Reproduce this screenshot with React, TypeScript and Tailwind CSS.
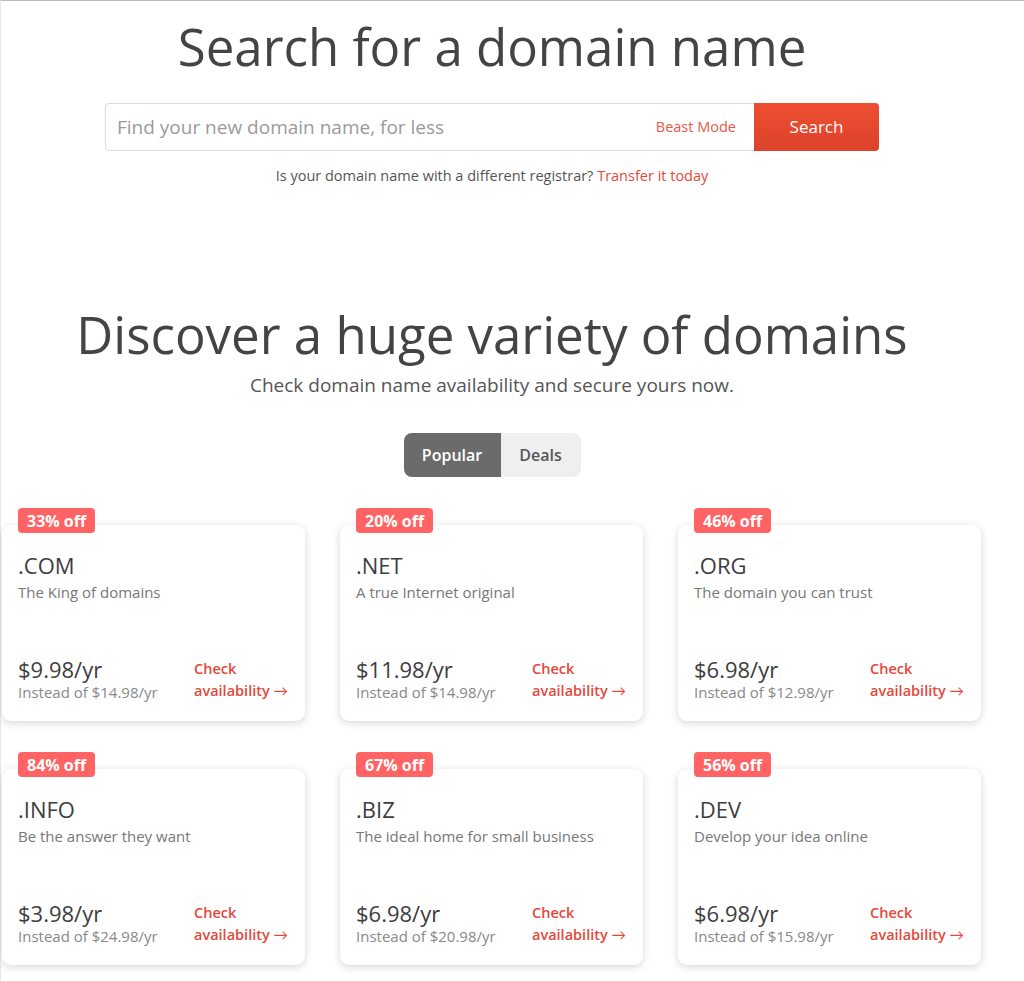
import React from 'react';

type Domain = {
  tld: string;
  blurb: string;
  price: string;
  was: string;
  off: string;
};

const domains: Domain[] = [
  { tld: '.COM', blurb: 'The King of domains', price: '$9.98/yr', was: '$14.98/yr', off: '33% off' },
  { tld: '.NET', blurb: 'A true Internet original', price: '$11.98/yr', was: '$14.98/yr', off: '20% off' },
  { tld: '.ORG', blurb: 'The domain you can trust', price: '$6.98/yr', was: '$12.98/yr', off: '46% off' },
  { tld: '.INFO', blurb: 'Be the answer they want', price: '$3.98/yr', was: '$24.98/yr', off: '84% off' },
  { tld: '.BIZ', blurb: 'The ideal home for small business', price: '$6.98/yr', was: '$20.98/yr', off: '67% off' },
  { tld: '.DEV', blurb: 'Develop your idea online', price: '$6.98/yr', was: '$15.98/yr', off: '56% off' },
];

function DomainCard({ d }: { d: Domain }) {
  return (
    <div className="relative">
      <span className="absolute left-[16px] top-[-17px] z-10 flex h-[25px] items-center rounded-[4px] bg-[#ff6363] px-[9px] text-[16px] font-bold text-white">
        {d.off}
      </span>
      <div className="flex h-[196px] flex-col rounded-[9px] bg-white px-[16px] pt-[26px] pb-[19px] shadow-[0_2px_8px_rgba(0,0,0,0.16)]">
        <div className="text-[22px] leading-[28px] text-[#3d3d3d]">{d.tld}</div>
        <div className="mt-[3px] text-[15px] leading-[20px] text-[#777]">{d.blurb}</div>
        <div className="mt-auto flex items-end">
          <div className="w-[176px]">
            <div className="text-[22px] leading-[26px] text-[#3d3d3d]">{d.price}</div>
            <div className="text-[15px] leading-[20px] text-[#888]">Instead of {d.was}</div>
          </div>
          <a className="text-[14.5px] leading-[22px] font-semibold text-[#e5483a]" href="#">
            Check
            <br />
            availability <span className="font-['Lato',sans-serif] font-normal">→</span>
          </a>
        </div>
      </div>
    </div>
  );
}

export default function App() {
  return (
    <div className="min-h-[981px] border-t border-l border-t-[#bdbdbd] border-l-[#e8e8e8] bg-white font-['Open_Sans',sans-serif]">
      <div className="w-[982px]">
        <section className="flex flex-col items-center">
          <h1 className="mt-[13px] text-[51px] leading-[64px] text-[#444]">Search for a domain name</h1>
          <div className="mt-[25px] flex h-[48px] w-[774px]">
            <div className="flex flex-1 items-center rounded-l-[4px] border border-r-0 border-[#dcdcdc] pl-[11px] pr-[18px]">
              <input
                className="flex-1 bg-transparent text-[19px] text-[#444] outline-none placeholder:text-[#9a9a9a]"
                placeholder="Find your new domain name, for less"
              />
              <span className="text-[14.5px] text-[#e8584b]">Beast Mode</span>
            </div>
            <button className="w-[125px] rounded-r-[4px] bg-gradient-to-b from-[#ee4e30] to-[#dc432d] text-[17px] text-white">
              Search
            </button>
          </div>
          <p className="mt-[14px] text-[14.5px] text-[#555]">
            Is your domain name with a different registrar? <a className="text-[#e5483a]" href="#">Transfer it today</a>
          </p>
        </section>

        <section className="mt-[115px] flex flex-col items-center">
          <h2 className="text-[51px] leading-[64px] text-[#444]">Discover a huge variety of domains</h2>
          <p className="mt-[5px] text-[19px] text-[#555]">Check domain name availability and secure yours now.</p>
          <div className="mt-[34px] flex h-[44px] overflow-hidden rounded-[8px] text-[16px]">
            <button className="w-[97px] bg-[#6b6b6b] font-semibold text-white">Popular</button>
            <button className="w-[80px] bg-[#efefef] font-semibold text-[#555]">Deals</button>
          </div>
        </section>

        <div className="mt-[48px] grid grid-cols-[303px_303px_303px] gap-x-[35px] gap-y-[48px] pl-[1px]">
          {domains.map((d) => (
            <DomainCard key={d.tld} d={d} />
          ))}
        </div>
      </div>
    </div>
  );
}
